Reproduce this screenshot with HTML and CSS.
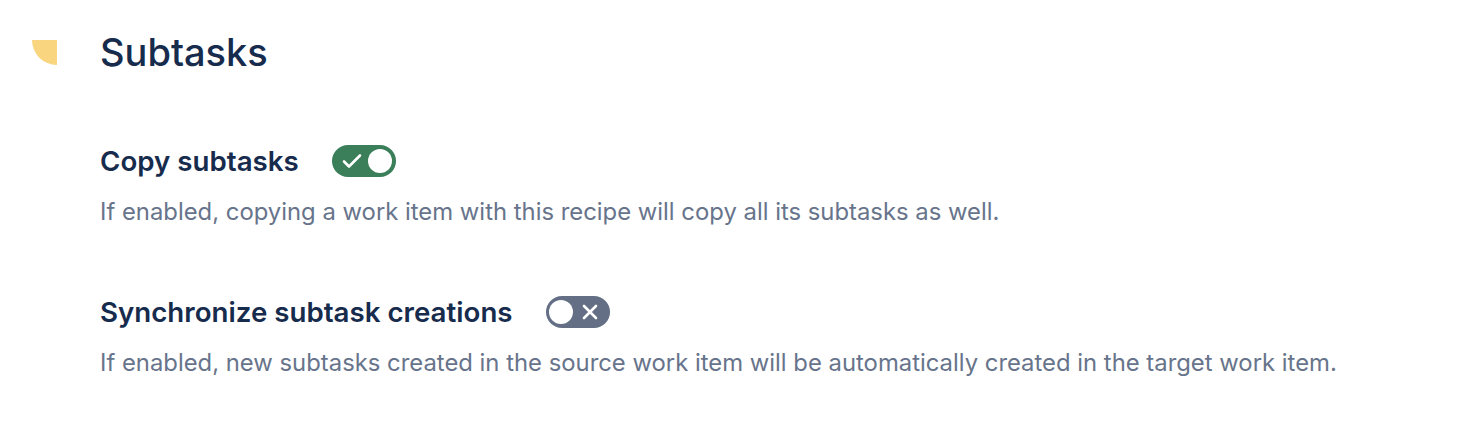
FILE: index.html
```html
<!DOCTYPE html>
<html lang="en">
<head>
<meta charset="utf-8">
<title>Subtasks</title>
<link rel="stylesheet" href="styles.css">
</head>
<body>
<section class="panel">
  <header class="panel-head">
    <span class="marker"></span>
    <h1 class="panel-title">Subtasks</h1>
  </header>
  <div class="settings">
    <div class="setting">
      <div class="setting-row">
        <span class="setting-label">Copy subtasks</span>
        <span class="toggle toggle-on" role="switch" aria-checked="true">
          <svg class="toggle-icon" viewBox="0 0 20 16" width="20" height="16"><path d="M2 8.5l5 5L18 2.5" fill="none" stroke="#fff" stroke-width="2.6" stroke-linecap="round" stroke-linejoin="round"/></svg>
          <span class="knob"></span>
        </span>
      </div>
      <p class="setting-desc">If enabled, copying a work item with this recipe will copy all its subtasks as well.</p>
    </div>
    <div class="setting">
      <div class="setting-row">
        <span class="setting-label">Synchronize subtask creations</span>
        <span class="toggle toggle-off" role="switch" aria-checked="false">
          <span class="knob"></span>
          <svg class="toggle-icon" viewBox="0 0 16 16" width="16" height="16"><path d="M2 2l12 12M14 2L2 14" fill="none" stroke="#fff" stroke-width="2.6" stroke-linecap="round"/></svg>
        </span>
      </div>
      <p class="setting-desc">If enabled, new subtasks created in the source work item will be automatically created in the target work item.</p>
    </div>
  </div>
</section>
</body>
</html>
```

FILE: styles.css
```css
* { box-sizing: border-box; }

body {
  margin: 0;
  background: #ffffff;
  font-family: Inter, "Noto Sans", sans-serif;
  color: #172b4d;
}

.panel {
  padding: 30px 0 0 32px;
}

.panel-head {
  display: flex;
  align-items: flex-start;
  gap: 43px;
}

.marker {
  width: 25px;
  height: 25px;
  margin-top: 10px;
  background: #f8d57e;
  border-bottom-left-radius: 100%;
}

.panel-title {
  margin: 0;
  font-size: 38px;
  line-height: 44px;
  font-weight: 500;
  color: #172b4d;
}

.settings {
  padding-left: 68px;
  margin-top: 71px;
  display: flex;
  flex-direction: column;
  gap: 68px;
}

.setting-row {
  display: flex;
  align-items: center;
  gap: 33px;
}

.setting-label {
  font-size: 27.7px;
  font-weight: 600;
  line-height: 32px;
}

.toggle {
  width: 64px;
  height: 32px;
  border-radius: 16px;
  display: flex;
  align-items: center;
  justify-content: space-between;
  padding: 0 4px 0 10px;
}

.toggle-on { background: #3b7e5a; }
.toggle-off { background: #646f86; padding: 0 12px 0 3px; }

.knob {
  width: 24px;
  height: 24px;
  border-radius: 50%;
  background: #ffffff;
}

.toggle-icon { display: block; }

.setting-desc {
  margin: 19px 0 0;
  font-size: 23.85px;
  line-height: 32px;
  color: #67748b;
}
```
